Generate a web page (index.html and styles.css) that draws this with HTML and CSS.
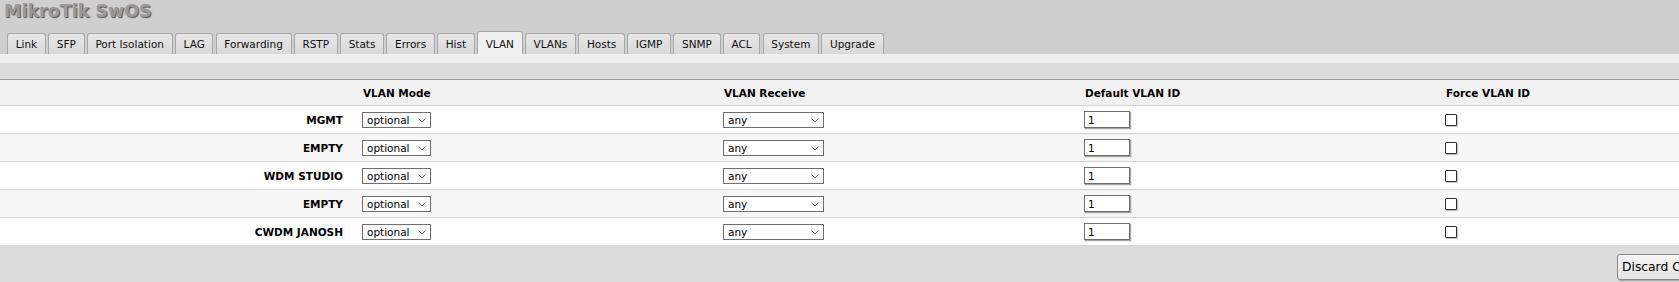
FILE: index.html
```html
<!DOCTYPE html>
<html lang="en">
<head>
    <meta charset="UTF-8">
    <title>MikroTik SwOS - VLAN</title>
    <link rel="stylesheet" href="styles.css">
</head>
<body>
    <div class="top">
        <div class="logo">MikroTik SwOS</div>
        <ul class="tabs">
            <li>Link</li>
            <li>SFP</li>
            <li>Port Isolation</li>
            <li>LAG</li>
            <li>Forwarding</li>
            <li>RSTP</li>
            <li>Stats</li>
            <li>Errors</li>
            <li>Hist</li>
            <li class="active">VLAN</li>
            <li>VLANs</li>
            <li>Hosts</li>
            <li>IGMP</li>
            <li>SNMP</li>
            <li>ACL</li>
            <li>System</li>
            <li>Upgrade</li>
        </ul>
    </div>
    <div class="strip"></div>

    <div class="content">
        <table class="grid">
            <colgroup>
                <col class="w">
                <col class="w">
                <col class="w">
                <col class="w">
                <col>
            </colgroup>
            <thead>
                <tr>
                    <th></th>
                    <th>VLAN Mode</th>
                    <th>VLAN Receive</th>
                    <th>Default VLAN ID</th>
                    <th>Force VLAN ID</th>
                </tr>
            </thead>
            <tbody>
                <tr>
                    <td class="name">MGMT</td>
                    <td><span class="sel mode"><select><option>optional</option></select><svg viewBox="0 0 8 5"><polyline points="0.5,0.5 4,4 7.5,0.5"/></svg></span></td>
                    <td><span class="sel recv"><select><option>any</option></select><svg viewBox="0 0 8 5"><polyline points="0.5,0.5 4,4 7.5,0.5"/></svg></span></td>
                    <td><input class="vid" type="text" value="1"></td>
                    <td><input class="chk" type="checkbox"></td>
                </tr>
                <tr>
                    <td class="name">EMPTY</td>
                    <td><span class="sel mode"><select><option>optional</option></select><svg viewBox="0 0 8 5"><polyline points="0.5,0.5 4,4 7.5,0.5"/></svg></span></td>
                    <td><span class="sel recv"><select><option>any</option></select><svg viewBox="0 0 8 5"><polyline points="0.5,0.5 4,4 7.5,0.5"/></svg></span></td>
                    <td><input class="vid" type="text" value="1"></td>
                    <td><input class="chk" type="checkbox"></td>
                </tr>
                <tr>
                    <td class="name">WDM STUDIO</td>
                    <td><span class="sel mode"><select><option>optional</option></select><svg viewBox="0 0 8 5"><polyline points="0.5,0.5 4,4 7.5,0.5"/></svg></span></td>
                    <td><span class="sel recv"><select><option>any</option></select><svg viewBox="0 0 8 5"><polyline points="0.5,0.5 4,4 7.5,0.5"/></svg></span></td>
                    <td><input class="vid" type="text" value="1"></td>
                    <td><input class="chk" type="checkbox"></td>
                </tr>
                <tr>
                    <td class="name">EMPTY</td>
                    <td><span class="sel mode"><select><option>optional</option></select><svg viewBox="0 0 8 5"><polyline points="0.5,0.5 4,4 7.5,0.5"/></svg></span></td>
                    <td><span class="sel recv"><select><option>any</option></select><svg viewBox="0 0 8 5"><polyline points="0.5,0.5 4,4 7.5,0.5"/></svg></span></td>
                    <td><input class="vid" type="text" value="1"></td>
                    <td><input class="chk" type="checkbox"></td>
                </tr>
                <tr>
                    <td class="name">CWDM JANOSH</td>
                    <td><span class="sel mode"><select><option>optional</option></select><svg viewBox="0 0 8 5"><polyline points="0.5,0.5 4,4 7.5,0.5"/></svg></span></td>
                    <td><span class="sel recv"><select><option>any</option></select><svg viewBox="0 0 8 5"><polyline points="0.5,0.5 4,4 7.5,0.5"/></svg></span></td>
                    <td><input class="vid" type="text" value="1"></td>
                    <td><input class="chk" type="checkbox"></td>
                </tr>
            </tbody>
        </table>

        <div class="actions">
            <button class="btn">Discard Changes</button>
        </div>
    </div>
</body>
</html>
```

FILE: styles.css
```css
/* General */
body, html {
    margin: 0;
    height: 100%;
    overflow: hidden;
    background: #dcdcdc;
    font-family: "DejaVu Sans", Verdana, sans-serif;
    font-size: 10.5px;
    color: #000;
}

/* Header with logo and tabs */
.top {
    background: #cfcfcf;
}
.logo {
    padding-left: 4px;
    font-size: 17.5px;
    font-weight: bold;
    line-height: 22px;
    color: #9a9a9a;
    text-shadow: 1px 1px 1px #555;
}
.tabs {
    display: flex;
    align-items: flex-end;
    height: 32px;
    margin: 0;
    padding: 0 0 0 7px;
    list-style: none;
}
.tabs li {
    height: 20px;
    line-height: 20px;
    padding: 0 7.7px;
    margin-right: 2.2px;
    border: 1px solid #a8a8a8;
    border-bottom: none;
    border-radius: 3px 3px 0 0;
    background: linear-gradient(#e6e6e6, #d9d9d9);
    color: #111;
    white-space: nowrap;
}
.tabs li.active {
    height: 22px;
    line-height: 24px;
    background: #f0f0f0;
}
.strip {
    height: 9px;
    background: #efefef;
}

/* Table */
.content {
    padding-top: 16px;
}
.grid {
    width: 100%;
    table-layout: fixed;
    border-collapse: collapse;
    border-top: 1px solid #9a9a9a;
}
.grid col.w {
    width: 21.5%;
}
.grid th {
    height: 25px;
    padding: 0 0 0 2px;
    text-align: left;
    font-weight: bold;
    background: #f1f1f1;
    border-bottom: 1px solid #d4d4d4;
}
.grid td {
    height: 27px;
    padding: 0 0 0 1px;
    border-bottom: 1px solid #d4d4d4;
    background: #fff;
    vertical-align: middle;
}
.grid tbody tr:nth-child(even) td {
    background: #f7f7f7;
}
.grid tbody tr:last-child td {
    border-bottom: none;
}
.grid td.name {
    padding-right: 18px;
    text-align: right;
    font-weight: bold;
}

/* Form controls */
.sel {
    position: relative;
    display: inline-block;
    vertical-align: middle;
}
.sel select {
    display: block;
    height: 16px;
    margin: 0;
    padding: 0 0 0 4px;
    border: 1px solid #6f6f6f;
    border-radius: 0;
    background: #fff;
    font-family: inherit;
    font-size: 10.5px;
    color: #000;
    appearance: none;
    -webkit-appearance: none;
}
.sel.mode select {
    width: 69px;
}
.sel.recv select {
    width: 101px;
}
.sel svg {
    position: absolute;
    right: 5px;
    top: 6px;
    width: 8px;
    height: 5px;
    pointer-events: none;
    fill: none;
    stroke: #777;
    stroke-width: 1;
}
.vid {
    width: 46px;
    height: 17px;
    box-sizing: border-box;
    margin: 0;
    padding: 0 3px;
    border: 1px solid #6f6f6f;
    box-shadow: 1px 1px 1px rgba(0, 0, 0, 0.35);
    font-family: inherit;
    font-size: 10.5px;
    vertical-align: middle;
}
.chk {
    width: 12px;
    height: 12px;
    margin: 0;
    border: 1px solid #333;
    border-radius: 1px;
    background: #fff;
    box-shadow: 1px 1px 1px rgba(0, 0, 0, 0.25);
    appearance: none;
    -webkit-appearance: none;
    vertical-align: middle;
}

/* Buttons */
.actions {
    display: flex;
    padding: 9px 0 0 1617px;
    white-space: nowrap;
}
.btn {
    flex: none;
    height: 26px;
    padding: 0 4px;
    border: 1px solid #8a8a8a;
    border-radius: 3px;
    background: linear-gradient(#f6f6f6, #e4e4e4);
    box-shadow: 1px 1px 1px rgba(0, 0, 0, 0.25);
    font-family: inherit;
    font-size: 12.3px;
    color: #000;
}
```
